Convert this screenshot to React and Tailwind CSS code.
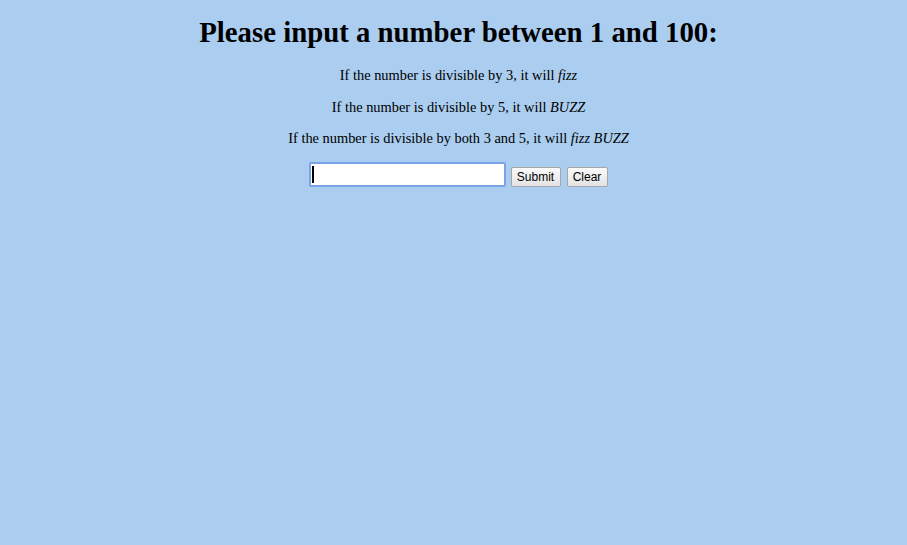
const rules = [
  { text: 'If the number is divisible by 3, it will ', word: 'fizz' },
  { text: 'If the number is divisible by 5, it will ', word: 'BUZZ' },
  { text: 'If the number is divisible by both 3 and 5, it will ', word: 'fizz BUZZ' },
];

const App = () => {
  return (
    <div className="min-h-[545px] bg-[#abcdef] text-center text-black font-['Liberation_Serif',serif] pt-[16px] pl-[10px]">
      <h1 className="text-[28.8px] font-bold leading-[33px] mb-[18px]">
        Please input a number between 1 and 100:
      </h1>

      {rules.map(r => (
        <p key={r.word} className="text-[14.4px] leading-[16px] mb-[15.5px]">
          {r.text}
          <em>{r.word}</em>
        </p>
      ))}

      <div className="flex justify-center items-end pr-[1px]">
        <div className="w-[197px] h-[25px] bg-white border-2 border-[#7aa3e8] rounded-[2px] flex items-center pl-[1px]">
          <span className="block w-[2px] h-[17px] bg-black" />
        </div>
        <button className="w-[50px] h-[20px] ml-[5px] text-[12px] leading-none font-['Liberation_Sans',Arial,sans-serif] text-black bg-gradient-to-b from-[#fbfbfb] to-[#e3e3e3] border border-[#a6a6a6] rounded-[2px]">
          Submit
        </button>
        <button className="w-[41px] h-[20px] ml-[6px] text-[12px] leading-none font-['Liberation_Sans',Arial,sans-serif] text-black bg-gradient-to-b from-[#fbfbfb] to-[#e3e3e3] border border-[#a6a6a6] rounded-[2px]">
          Clear
        </button>
      </div>
    </div>
  );
};

export default App;
